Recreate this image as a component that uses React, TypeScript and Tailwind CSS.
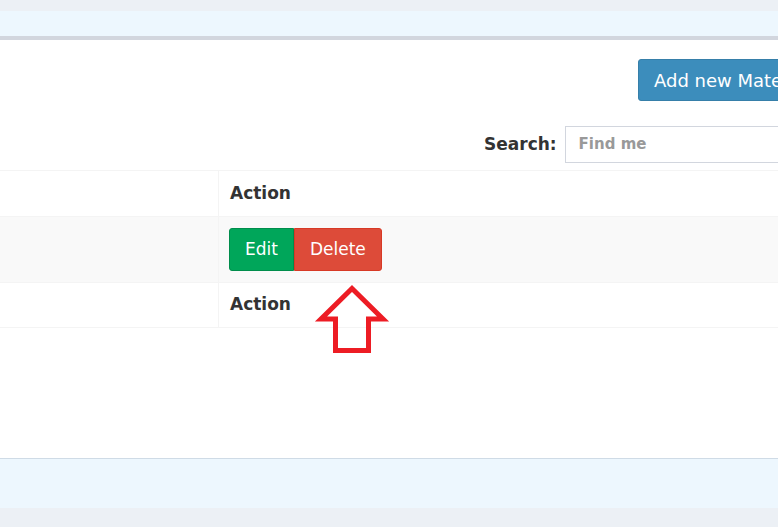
import React from "react";

export default function App() {
  const font = { fontFamily: '"DejaVu Sans", Verdana, sans-serif' };
  return (
    <div
      className="relative w-[778px] h-[527px] overflow-hidden bg-[#ecf0f5] text-[#333]"
      style={font}
    >
      <div className="h-[11px]" />
      <div className="h-[25px] bg-[#edf7fe]" />
      <div className="h-[423px] border-t-4 border-b border-t-[#d2d6de] border-b-[#cfdbe6] bg-white">
        <div className="flex pt-[19px] pl-[638px]">
          <button className="h-[42px] shrink-0 whitespace-nowrap rounded-[3px] border border-[#367fa9] bg-[#3c8dbc] px-[15px] text-[18px] text-white">
            Add new Material
          </button>
        </div>
        <div className="mt-[25px] flex items-center pl-[484px]">
          <span className="text-[17px] font-bold">Search:</span>
          <div className="ml-[8px] flex h-[37px] w-[260px] shrink-0 items-center border border-[#d2d6de] pl-[13px] text-[15px] font-bold text-[#999]">
            Find me
          </div>
        </div>
        <div className="mt-[7px] w-[1000px]">
          <div className="flex h-[46px] border-t border-[#f4f4f4]">
            <div className="w-[218px] shrink-0" />
            <div className="flex flex-1 items-center border-l border-[#f4f4f4] pl-[11px] text-[17px] font-bold">
              Action
            </div>
          </div>
          <div className="flex h-[66px] border-t border-[#f4f4f4] bg-[#f9f9f9]">
            <div className="w-[218px] shrink-0" />
            <div className="flex flex-1 items-start border-l border-[#f4f4f4] pl-[10px] pt-[11px]">
              <button className="h-[43px] rounded-l-[3px] border border-[#008d4c] bg-[#00a65a] px-[15px] text-[17px] text-white">
                Edit
              </button>
              <button className="h-[43px] rounded-r-[3px] border border-[#d73925] bg-[#dd4b39] px-[15px] text-[17px] text-white">
                Delete
              </button>
            </div>
          </div>
          <div className="flex h-[46px] border-y border-[#f4f4f4]">
            <div className="w-[218px] shrink-0" />
            <div className="flex flex-1 items-center border-l border-[#f4f4f4] pl-[11px] text-[17px] font-bold">
              Action
            </div>
          </div>
        </div>
      </div>
      <div className="h-[49px] bg-[#edf7fe]" />
      <svg
        className="absolute left-[312px] top-[280px]"
        width="80"
        height="80"
        viewBox="312 280 80 80"
      >
        <polygon
          points="352,288.5 383,319 368.5,319 368.5,350.5 335.5,350.5 335.5,319 321,319"
          fill="none"
          stroke="#ed1c24"
          strokeWidth="5"
          strokeLinejoin="miter"
        />
      </svg>
    </div>
  );
}
